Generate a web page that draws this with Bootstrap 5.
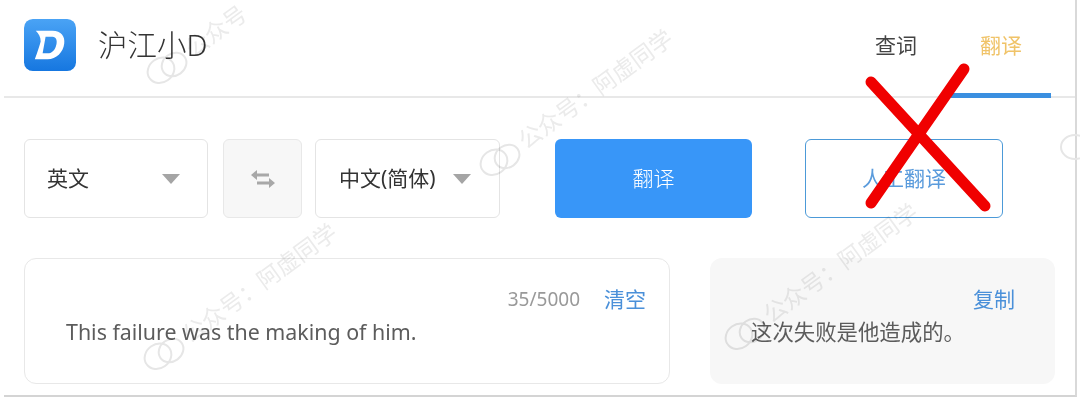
<!DOCTYPE html>
<html lang="zh">
<head>
  <meta charset="utf-8">
  <title>沪江小D</title>
  <link rel="stylesheet" href="https://cdn.jsdelivr.net/npm/bootstrap@5.3.0/dist/css/bootstrap.min.css">
  <style>
    html, body { height: 400px; overflow: hidden; background: #fff; }
    body { font-family: "Noto Sans", "Noto Sans CJK SC", sans-serif; color: #333; }
    .app-box { position: relative; width: 1073px; height: 397px; margin-left: 4px; border-right: 2px solid #d9d9d9; border-bottom: 2px solid #d4d4d4; overflow: hidden; }
    .app-head { height: 98px; border-bottom: 2px solid #e8e8e8; padding-left: 20px; }
    .app-logo { width: 52px; height: 52px; margin-top: -6px; }
    .app-title { margin-left: 22px; margin-top: -6px; font-size: 29.5px; font-weight: 300; color: #333; line-height: 1; }
    .tab-item { width: 100px; height: 98px; padding-top: 30px; margin-bottom: -2px; text-align: center; font-size: 21px; line-height: 30px; color: #444; }
    .tab-gap { margin-right: 5px; }
    .tab-on { color: #f0c368; border-bottom: 5px solid #3b8fe0; }
    .tab-wrap { margin-right: 24px; }
    .tool-row { padding: 41px 0 0 20px; height: 120px; }
    .pick { width: 184px; height: 79px; border: 1px solid #e4e4e4; border-radius: 6px; padding: 0 27px 0 22px; font-size: 21px; color: #333; }
    .pick-wide { width: 185px; padding-left: 23px; padding-right: 28px; }
    .arrow { width: 0; height: 0; border-left: 9px solid transparent; border-right: 9px solid transparent; border-top: 10px solid #a5a5a5; }
    .swap { width: 79px; height: 79px; margin: 0 13px 0 15px; background: #f7f7f7; border: 1px solid #e8e8e8; border-radius: 6px; }
    .go-btn { width: 197px; height: 79px; margin-left: 55px; border: 0; border-radius: 6px; background: #3896f8; color: #fff; font-size: 21px; font-weight: 300; }
    .human-btn { width: 198px; height: 79px; margin-left: 53px; border: 1px solid #4c9ad8; border-radius: 6px; background: #fff; color: #5a9bdc; font-size: 21px; }
    .panels { padding: 40px 0 0 20px; }
    .src-box { width: 646px; height: 126px; border: 1px solid #e8e8e8; border-radius: 12px; padding: 25px 23px 0 41px; }
    .dst-box { width: 345px; height: 126px; margin-left: 40px; background: #f7f7f7; border-radius: 12px; padding: 26px 40px 0 41px; }
    .count { font-size: 19px; line-height: 30px; color: #999; margin-right: 24px; }
    .act { font-size: 21px; line-height: 30px; color: #4a90d9; }
    .say { font-size: 21.4px; line-height: 30px; color: #5c5c5c; margin-top: 3px; white-space: nowrap; }
    .cross { position: absolute; left: 855px; top: 60px; }
    .wm { position: absolute; color: #ebebeb; font-size: 23px; white-space: nowrap; transform: rotate(-36deg); transform-origin: left center; mix-blend-mode: multiply; }
    .wm svg { vertical-align: -8px; margin-right: 4px; }
    .wm-a { left: 142px; top: 348px; }
    .wm-b { left: 478px; top: 154px; }
    .wm-c { left: 723px; top: 328px; }
    .wm-d { left: 145px; top: 62px; }
    .wm-e { position: absolute; left: 1060px; top: 132px; }
  </style>
</head>
<body>
  <div class="app-box">
    <div class="app-head d-flex align-items-center">
      <svg class="app-logo" viewBox="0 0 53 53">
        <defs><linearGradient id="lg" x1="0" y1="0" x2="0" y2="1"><stop offset="0" stop-color="#4aa3f5"/><stop offset="1" stop-color="#1677e0"/></linearGradient></defs>
        <rect width="53" height="53" rx="9" fill="url(#lg)"/>
        <path fill-rule="evenodd" fill="#fff" d="M12 12 H29 C38 12 42 18 41 25 C40 34 33 41 24 41 H11 C14 33 16 27 17 23 C17 18 15 15 12 12 Z M22 18 H29 C33 18 34 22 33 26 C32 31 29 35 24 35 H19 Z"/>
      </svg>
      <div class="app-title">沪江小D</div>
      <div class="d-flex ms-auto tab-wrap">
        <div class="tab-item tab-gap">查词</div>
        <div class="tab-item tab-on">翻译</div>
      </div>
    </div>

    <div class="tool-row d-flex">
      <div class="pick d-flex align-items-center justify-content-between"><span>英文</span><span class="arrow"></span></div>
      <div class="swap d-flex align-items-center justify-content-center">
        <svg width="26" height="20" viewBox="0 0 26 20"><path fill="#a8a8a8" d="M1 6 L7 1 V4.500 H19 V7.500 H7 V11 Z M25 14 L19 9 V12.500 H7 V15.500 H19 V19 Z"/></svg>
      </div>
      <div class="pick pick-wide d-flex align-items-center justify-content-between"><span>中文(简体)</span><span class="arrow"></span></div>
      <button class="go-btn" type="button">翻译</button>
      <button class="human-btn" type="button">人工翻译</button>
    </div>

    <div class="panels d-flex">
      <div class="src-box">
        <div class="d-flex justify-content-end"><span class="count">35/5000</span><span class="act">清空</span></div>
        <div class="say">This failure was the making of him.</div>
      </div>
      <div class="dst-box">
        <div class="d-flex justify-content-end"><span class="act">复制</span></div>
        <div class="say">这次失败是他造成的。</div>
      </div>
    </div>

    <div class="wm wm-a"><svg width="44" height="32" viewBox="0 0 44 32"><ellipse cx="15" cy="15" rx="14" ry="12" fill="none" stroke="#e6e6e6" stroke-width="2"/><ellipse cx="29" cy="18" rx="13" ry="11" fill="none" stroke="#e6e6e6" stroke-width="2"/></svg>公众号：阿虚同学</div>
    <div class="wm wm-b"><svg width="44" height="32" viewBox="0 0 44 32"><ellipse cx="15" cy="15" rx="14" ry="12" fill="none" stroke="#e6e6e6" stroke-width="2"/><ellipse cx="29" cy="18" rx="13" ry="11" fill="none" stroke="#e6e6e6" stroke-width="2"/></svg>公众号：阿虚同学</div>
    <div class="wm wm-c"><svg width="44" height="32" viewBox="0 0 44 32"><ellipse cx="15" cy="15" rx="14" ry="12" fill="none" stroke="#e6e6e6" stroke-width="2"/><ellipse cx="29" cy="18" rx="13" ry="11" fill="none" stroke="#e6e6e6" stroke-width="2"/></svg>公众号：阿虚同学</div>
    <div class="wm wm-d"><svg width="44" height="32" viewBox="0 0 44 32"><ellipse cx="15" cy="15" rx="14" ry="12" fill="none" stroke="#e6e6e6" stroke-width="2"/><ellipse cx="29" cy="18" rx="13" ry="11" fill="none" stroke="#e6e6e6" stroke-width="2"/></svg>公众号</div>

    <svg class="cross" width="140" height="160" viewBox="0 0 140 160">
      <path d="M12 22 L126 146 M105 9 L12 143" fill="none" stroke="#f00000" stroke-width="11" stroke-linecap="round"/>
    </svg>
  </div>
  <svg class="wm-e" width="20" height="32" viewBox="0 0 20 32"><ellipse cx="15" cy="15" rx="14" ry="12" fill="none" stroke="#e6e6e6" stroke-width="2"/></svg>
</body>
</html>
